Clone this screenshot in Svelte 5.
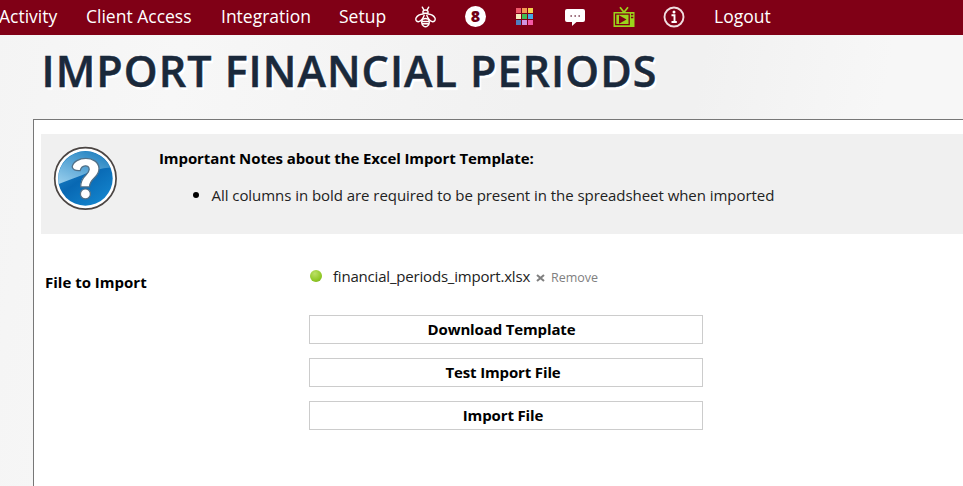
<script>
  const before = [
    { label: 'Activity' },
    { label: 'Client Access' },
    { label: 'Integration' },
    { label: 'Setup' }
  ];
  const tiles = ['#ee5a6b', '#f39a55', '#f4d04e', '#f2ecbc', '#43bd55', '#45a9e8', '#4f7ec0', '#d194df', '#f55aa5'];
  const actions = ['Download Template', 'Test Import File', 'Import File'];
</script>

<div class="page">
  <nav>
    {#each before as item, i}
      <a class="link n{i}" href="#top">{item.label}</a>
    {/each}
    <span class="icons">
      <svg class="bee" width="21" height="22" viewBox="0 0 21 22" fill="none" stroke="#fff" stroke-width="1.4" stroke-linecap="round">
        <path d="M7.300 1.200l1.700 3M13.700 1.200l-1.700 3M8 7V5.200q2.500-2.400 5 0V7M8 7.200h5" />
        <path d="M8.200 8Q3 8.300 1 12Q.2 15.700 3.800 15.700Q7.300 14.700 9.200 9.200M12.800 8Q18 8.300 20 12Q20.800 15.700 17.200 15.700Q13.700 14.700 11.800 9.200" />
        <path d="M8 13.200q2.500-1.400 5 0M6.900 15.500h7.200M6.900 17.800h7.200M7.300 13.500q-1.600 4.500 1.200 6.500 2 1.500 4 0 2.800-2 1.200-6.500" />
      </svg>
      <span class="count">8</span>
      <span class="tiles">{#each tiles as color}<i style:background={color}></i>{/each}</span>
      <svg class="chat" width="20" height="19" viewBox="0 0 20 19">
        <path fill="#fff" d="M2 1h16q2 0 2 2v9q0 2-2 2h-6.500l-4.500 4v-4H2q-2 0-2-2V3q0-2 2-2z" />
        <path stroke="#80475a" stroke-width="1.400" stroke-dasharray="1.600 2.400" d="M5.400 8h10" />
      </svg>
      <svg class="tv" width="22" height="22" viewBox="0 0 22 22">
        <path d="M7 1.300l4 5 4-5" stroke="#9bd51b" stroke-width="1.700" fill="none" />
        <path d="M.5 6h21v15h-21z" fill="#9bd51b" />
        <path d="M2.700 8.200h13.500v10.500H2.700z" fill="none" stroke="#800016" stroke-width="1.300" />
        <path d="M6 9.300v8.500l7.500-4.300z" fill="#800016" />
        <path d="M18 8.500h2.300M18 11.500h2.300" stroke="#800016" stroke-width="1.300" />
      </svg>
      <svg class="info" width="22" height="22" viewBox="0 0 22 22">
        <circle cx="11" cy="11" r="9.500" fill="none" stroke="#f0dde0" stroke-width="1.900" />
        <circle cx="11" cy="6" r="1.500" fill="#fff" />
        <path d="M8.500 9.300H11.500v6.500M8.500 16h5.300" fill="none" stroke="#fff" stroke-width="1.900" />
      </svg>
    </span>
    <a class="link logout" href="#top">Logout</a>
  </nav>

  <h1>IMPORT FINANCIAL PERIODS</h1>

  <main>
    <section class="notice">
      <svg class="help" width="64" height="64" viewBox="0 0 64 64">
        <defs>
          <linearGradient id="blue" x1="0" y1="0" x2=".7" y2="1">
            <stop offset="0" stop-color="#2a92d0" /><stop offset=".55" stop-color="#0868b3" /><stop offset="1" stop-color="#1383cc" />
          </linearGradient>
          <linearGradient id="shine" x1="0" y1="1" x2=".75" y2="0">
            <stop offset="0" stop-color="#9bd0ee" /><stop offset="1" stop-color="#2483c1" />
          </linearGradient>
        </defs>
        <g transform="translate(.4 .4)">
          <circle cx="32" cy="32" r="30.700" fill="#fff" stroke="#4b4543" stroke-width="1.700" />
          <circle cx="32" cy="32" r="27.300" fill="url(#blue)" />
          <path d="M5.300 37.500A27.300 27.300 0 0 1 57 21.200Q44 22 29 28.500 13 34.500 5.300 37.500z" fill="url(#shine)" />
          <path d="M18.800 20.500C20.500 9.600 44.700 8.500 45.600 21.800C46 31.400 36.500 31.500 36 40.500H27.300C27 29 35.600 29 35.800 23.200C35.800 17.600 28 18.400 26.800 24.200C23 24.500 19.400 23.200 18.800 20.500z" fill="#fff" stroke="#527087" stroke-width="1.300" />
          <circle cx="32" cy="47.500" r="5" fill="#fff" stroke="#527087" stroke-width="1.300" />
        </g>
      </svg>
      <div class="copy">
        <strong>Important Notes about the Excel Import Template:</strong>
        <ul><li><span>All columns in bold are required to be present in the spreadsheet when imported</span></li></ul>
      </div>
    </section>

    <section class="form">
      <label for="import">File to Import</label>
      <div class="field">
        <div class="file">
          <span class="dot"></span>
          <span class="name">financial_periods_import.xlsx</span>
          <svg width="9" height="8" viewBox="0 0 9 8"><path d="M1 1l7 6M8 1L1 7" stroke="#808080" stroke-width="2.100" /></svg>
          <span class="remove">Remove</span>
        </div>
        {#each actions as action, i}
          <button class="b{i}"><span>{action}</span></button>
        {/each}
      </div>
    </section>
  </main>
</div>

<style>
  :global(body) { margin: 0; overflow: hidden; }
  .page {
    width: 963px; height: 486px; overflow: hidden; display: flex; flex-direction: column;
    font-family: "Open Sans", "Noto Sans", sans-serif; color: #000;
    background: linear-gradient(100deg, #f4f4f4 0, #f7f7f7 18%, #f1f1f1 52%, #f1f1f1 68%, #f7f7f7 86%);
  }
  nav { height: 35px; flex: none; background: #800016; display: flex; align-items: center; }
  .link { color: #fff; text-decoration: none; font-size: 17.500px; line-height: 33px; white-space: nowrap; flex: none; height: 35px; }
  .n0 { width: 87px; margin-left: -1px; }
  .n1 { width: 135px; }
  .n2 { width: 118px; }
  .n3 { width: 75px; }
  .icons { display: flex; align-items: center; height: 35px; width: 300px; flex: none; margin-top: -2px; }
  .icons > * { flex: none; }
  .bee { margin-left: 1px; }
  .count { width: 21px; height: 21px; margin-left: 29px; border-radius: 50%; background: #fff; color: #700014; font: 800 16px/21px "Open Sans", sans-serif; text-align: center; }
  .tiles { margin-left: 30px; display: grid; grid-template-columns: repeat(3, 5px); grid-template-rows: repeat(3, 5px); gap: 1px; height: 17px; margin-top: -1px; }
  .chat { margin: 2px 0 0 32px; }
  .tv { margin-left: 28px; }
  .info { margin-left: 28px; }
  h1 {
    margin: 0; height: 84px; flex: none; padding-left: 41.500px; font-size: 43px; line-height: 71px; letter-spacing: 1.030px;
    font-weight: 600; color: #1a293b; white-space: nowrap; text-shadow: 2px 3px 1px #fff; -webkit-text-stroke: .5px #1a293b;
  }
  main { margin-left: 33px; flex: 1; border: 1px solid #777; border-right: 0; border-bottom: 0; background: #fff; padding: 14px 0 0 7px; }
  .notice { height: 100px; background: #f0f0f0; display: flex; }
  .help { margin: 12px 0 0 12px; flex: none; }
  .copy { margin-left: 42px; padding-top: 14px; font-size: 15px; line-height: 21px; white-space: nowrap; }
  strong { display: block; letter-spacing: -.1px; }
  ul { margin: 15px 0 0; padding-left: 52.500px; }
  li::marker { font-size: 18px; }
  li span { color: #222; letter-spacing: -.05px; }
  .form { display: flex; }
  label { width: 268px; box-sizing: border-box; padding: 38px 0 0 4px; font-size: 15px; line-height: 21px; font-weight: 700; flex: none; white-space: nowrap; }
  .field { width: 394px; padding-top: 31px; }
  .file { height: 22px; display: flex; align-items: center; margin-bottom: 28px; white-space: nowrap; }
  .dot { width: 12px; height: 12px; border-radius: 50%; background: radial-gradient(circle at 40% 30%, #bce067, #91c927 60%, #75a51d); margin: 0 11px 0 1px; flex: none; }
  .name { width: 203px; font-size: 15px; color: #222; flex: none; letter-spacing: -.19px; }
  .file svg { flex: none; margin-top: 3px; }
  .remove { margin-left: 6px; font-size: 12.500px; color: #808080; padding-top: 2px; }
  button { display: block; width: 394px; height: 29px; margin: 0 0 14px; padding: 0 6px 1px 0; border: 1px solid #ccc; background: #fff; color: #000; font: 700 15px/26px "Open Sans", sans-serif; letter-spacing: -.14px; }
  .b0 { padding-right: 9px; }
</style>
